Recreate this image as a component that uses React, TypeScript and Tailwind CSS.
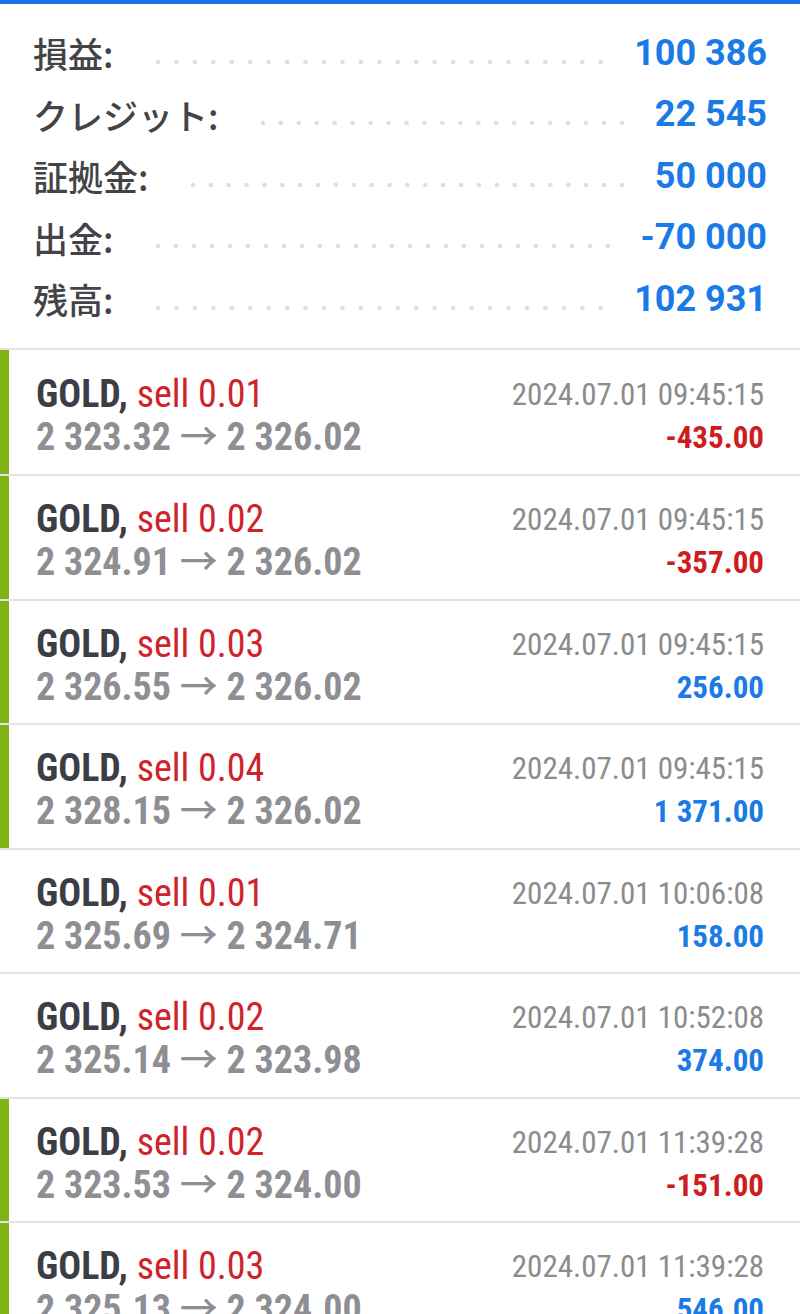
import React from 'react';

type Deal = {
  volume: string;
  open: string;
  close: string;
  time: string;
  profit: string;
  marked: boolean;
};

const summary = [
  { label: '損益:', value: '100 386' },
  { label: 'クレジット:', value: '22 545' },
  { label: '証拠金:', value: '50 000' },
  { label: '出金:', value: '-70 000' },
  { label: '残高:', value: '102 931' },
];

const deals: Deal[] = [
  { volume: '0.01', open: '2 323.32', close: '2 326.02', time: '2024.07.01 09:45:15', profit: '-435.00', marked: true },
  { volume: '0.02', open: '2 324.91', close: '2 326.02', time: '2024.07.01 09:45:15', profit: '-357.00', marked: true },
  { volume: '0.03', open: '2 326.55', close: '2 326.02', time: '2024.07.01 09:45:15', profit: '256.00', marked: true },
  { volume: '0.04', open: '2 328.15', close: '2 326.02', time: '2024.07.01 09:45:15', profit: '1 371.00', marked: true },
  { volume: '0.01', open: '2 325.69', close: '2 324.71', time: '2024.07.01 10:06:08', profit: '158.00', marked: false },
  { volume: '0.02', open: '2 325.14', close: '2 323.98', time: '2024.07.01 10:52:08', profit: '374.00', marked: false },
  { volume: '0.02', open: '2 323.53', close: '2 324.00', time: '2024.07.01 11:39:28', profit: '-151.00', marked: true },
  { volume: '0.03', open: '2 325.13', close: '2 324.00', time: '2024.07.01 11:39:28', profit: '546.00', marked: true },
];

function SummaryRow({ label, value }: { label: string; value: string }) {
  return (
    <div className="flex h-[61.5px] items-center">
      <span className="font-['Noto_Sans_CJK_JP',sans-serif] text-[35px] font-medium leading-none text-[#444448]">
        {label}
      </span>
      <div className="ml-[36px] mr-[24px] mt-[18px] h-[6px] flex-1 bg-[radial-gradient(circle,#dedede_2px,transparent_2.6px)] bg-[length:17.8px_6px] bg-repeat-space" />
      <span className="font-['Roboto',sans-serif] text-[36px] font-bold leading-none text-[#1a7be6]">{value}</span>
    </div>
  );
}

function DealRow({ deal, first }: { deal: Deal; first: boolean }) {
  const negative = deal.profit.startsWith('-');
  return (
    <div className={`flex border-b-2 border-[#e3e3e3] ${first ? 'h-[126.5px]' : 'h-[124.5px]'}`}>
      <div className={`w-[9px] ${deal.marked ? 'bg-[#80b314]' : 'bg-white'}`} />
      <div
        className={`flex flex-1 items-start justify-between pl-[27px] pr-[36px] font-['Roboto_Condensed','Roboto',sans-serif] [font-stretch:condensed] ${
          first ? 'pt-[23px]' : 'pt-[22px]'
        }`}
      >
        <div className="leading-[43px]">
          <div className="text-[38px]">
            <span className="font-bold text-[#3d3d45]">GOLD, </span>
            <span className="text-[#d0222a]">sell {deal.volume}</span>
          </div>
          <div className="text-[38px] font-bold text-[#8e8e93]">
            {deal.open}{' '}
            <span className="font-['Noto_Sans_CJK_JP',sans-serif] font-medium leading-[0px] [font-stretch:normal]">→</span>{' '}
            {deal.close}
          </div>
        </div>
        <div className="text-right leading-[43px]">
          <div className="text-[31px] text-[#8c8c8c]">{deal.time}</div>
          <div className={`text-[31px] font-bold ${negative ? 'text-[#cc1e1e]' : 'text-[#1a7be6]'}`}>{deal.profit}</div>
        </div>
      </div>
    </div>
  );
}

export default function App() {
  return (
    <div className="min-h-[1314px] w-[800px] overflow-hidden bg-white">
      <div className="h-[4px] bg-[#1a73e8]" />
      <div className="px-[33px] pb-[18px] pt-[18px]">
        {summary.map((row) => (
          <SummaryRow key={row.label} {...row} />
        ))}
      </div>
      <div className="h-[2px] bg-[#e3e3e3]" />
      {deals.map((deal, i) => (
        <DealRow key={i} deal={deal} first={i === 0} />
      ))}
    </div>
  );
}
